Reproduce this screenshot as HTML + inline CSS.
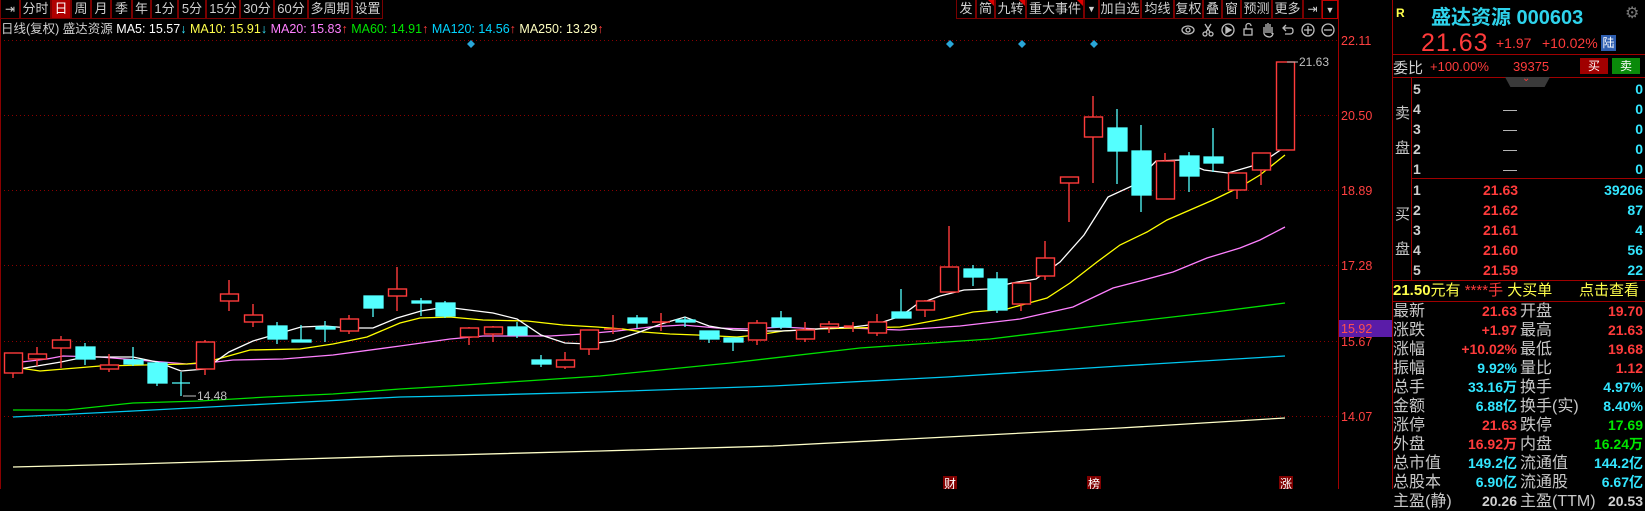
<!DOCTYPE html>
<html><head><meta charset="utf-8"><style>
*{margin:0;padding:0;box-sizing:border-box}
body{width:1645px;height:489px;background:#000;overflow:hidden;position:relative;font-family:"Liberation Sans","Noto Sans CJK SC",sans-serif;color:#c8c8c8}
.a{position:absolute;white-space:nowrap}
.tb{position:absolute;top:0;height:19px;border:1px solid #7a0000;border-top:none;font-size:13px;line-height:18px;text-align:center;color:#d0d0d0}
.tri{position:absolute;right:0;top:0;width:0;height:0;border-left:6px solid transparent;border-top:6px solid #e00000}
.r{color:#ff3b3b}.c{color:#33e6ff}.y{color:#ffff4c}.g{color:#00e600}.w{color:#d0d0d0}
.lb{font-size:15px;color:#c8c8c8}
.v{font-size:14px;font-weight:bold;text-align:right}
</style></head><body>

<div class="tb" style="left:0;width:20px;font-size:12px">⇥</div>
<div class="tb" style="left:20px;width:31px">分时</div>
<div class="tb" style="left:51px;width:20px;background:#b00000;color:#fff">日</div>
<div class="tb" style="left:71px;width:20px">周</div>
<div class="tb" style="left:91px;width:20px">月</div>
<div class="tb" style="left:111px;width:21px">季</div>
<div class="tb" style="left:132px;width:19px">年</div>
<div class="tb" style="left:151px;width:27px">1分</div>
<div class="tb" style="left:178px;width:28px">5分</div>
<div class="tb" style="left:206px;width:34px">15分</div>
<div class="tb" style="left:240px;width:34px">30分</div>
<div class="tb" style="left:274px;width:34px">60分</div>
<div class="tb" style="left:308px;width:44px">多周期</div>
<div class="tb" style="left:352px;width:31px">设置</div>

<div class="tb" style="left:956px;width:20px">发</div>
<div class="tb" style="left:976px;width:19px">简<div class="tri"></div></div>
<div class="tb" style="left:995px;width:31px">九转<div class="tri"></div></div>
<div class="tb" style="left:1026px;width:58px">重大事件<div class="tri"></div></div>
<div class="tb" style="left:1084px;width:15px;font-size:9px">▼</div>
<div class="tb" style="left:1099px;width:42px">加自选</div>
<div class="tb" style="left:1141px;width:33px">均线</div>
<div class="tb" style="left:1174px;width:29px">复权</div>
<div class="tb" style="left:1203px;width:19px">叠</div>
<div class="tb" style="left:1222px;width:19px">窗</div>
<div class="tb" style="left:1241px;width:31px">预测</div>
<div class="tb" style="left:1272px;width:31px">更多</div>
<div class="tb" style="left:1303px;width:19px;font-size:12px">⇥</div>
<div class="tb" style="left:1322px;width:16px;font-size:9px;border:1px solid #c00000">▼</div>

<div class="a" style="left:1px;top:21px;font-size:12.5px;line-height:16px">
<span class="w">日线(复权) 盛达资源 </span><span style="color:#fff">MA5: 15.57</span><span class="c">↓</span> <span class="y">MA10: 15.91</span><span class="c">↓</span> <span style="color:#ff80ff">MA20: 15.83</span><span class="r">↑</span> <span class="g">MA60: 14.91</span><span class="r">↑</span> <span style="color:#00d4ff">MA120: 14.56</span><span class="r">↑</span> <span style="color:#ffffc0">MA250: 13.29</span><span class="r">↑</span></div>

<svg class="a" style="left:0;top:0" width="1392" height="489">
<line x1="0.5" y1="19" x2="0.5" y2="489" stroke="#8a0000"/>
<line x1="1338.5" y1="0" x2="1338.5" y2="489" stroke="#a00000"/>
<g stroke="#8a0000" stroke-dasharray="1,3">
<line x1="0" y1="40.5" x2="1338" y2="40.5"/><line x1="0" y1="115.5" x2="1338" y2="115.5"/>
<line x1="0" y1="190.5" x2="1338" y2="190.5"/><line x1="0" y1="265.5" x2="1338" y2="265.5"/>
<line x1="0" y1="341.5" x2="1338" y2="341.5"/><line x1="0" y1="416.5" x2="1338" y2="416.5"/>
</g>
<g stroke="#bdbdbd" fill="none" stroke-width="1.3">
<ellipse cx="1188" cy="30" rx="6" ry="4"/><circle cx="1188" cy="30" r="2"/>
<circle cx="1205" cy="34" r="2"/><circle cx="1211" cy="34" r="2"/><path d="M1206 32L1211 24M1210 32L1205 24"/>
<circle cx="1228" cy="30" r="6"/><path d="M1226 27L1231 30L1226 33Z" fill="#bdbdbd"/>
<rect x="1244" y="29" width="8" height="6"/><path d="M1246 29V26a2.5 2.5 0 0 1 5 0"/>
<path d="M1264 34V27M1266 33V24M1268 33V23M1270 33V24M1272 34V27M1264 34Q1266 37 1270 37Q1273 36 1273 33"/>
<path d="M1284 28H1291Q1293 28 1293 31Q1293 34 1290 34H1285M1286 25L1283 28L1286 31"/>
<circle cx="1308" cy="30" r="6"/><path d="M1304 30H1312M1308 26V34"/>
<circle cx="1328" cy="30" r="6"/><path d="M1324 30H1332"/>
</g>
<g fill="#2aa6d8">
<path d="M471 40L475 44L471 48L467 44Z"/><path d="M950 40L954 44L950 48L946 44Z"/>
<path d="M1022 40L1026 44L1022 48L1018 44Z"/><path d="M1094 40L1098 44L1094 48L1090 44Z"/>
</g>
<g fill="none" stroke-width="1.3">
<polyline stroke="#ffffc8" points="13,467 133,464 267,460 400,456 450,455 600,451 773,446 947,437 1120,428 1285,418"/>
<polyline stroke="#00c8f0" points="13,417 133,411 267,404 400,397 450,396 600,392 773,386 947,377 1120,366 1285,356"/>
<polyline stroke="#00e000" points="13,410 67,410 133,403 200,401 267,397 333,394 400,389 450,386 600,376 730,363 860,348 990,339 1120,323 1207,313 1285,303"/>
<polyline stroke="#ff80ff" points="13,363 47,359 63,356 100,357 150,361 187,364 207,363 233,360 283,359 333,355 400,346 450,339 483,336 550,336 583,334 617,331 650,327 683,325 717,328 750,329 783,327 817,329 850,328 900,330 960,326 1020,319 1073,307 1113,288 1140,281 1173,272 1207,258 1240,248 1260,240 1285,227"/>
<polyline stroke="#ffff00" points="13,367 40,371 100,366 187,364 207,362 250,350 300,349 333,344 367,337 400,323 420,318 450,317 483,320 527,321 563,325 597,327 623,329 643,332 670,334 697,335 717,336 737,337 757,335 783,331 817,329 850,328 900,327 943,319 973,312 1007,309 1047,298 1070,283 1097,262 1120,245 1147,232 1167,220 1190,210 1213,200 1240,187 1260,175 1285,155"/>
<polyline stroke="#ffffff" points="13,370 37,366 61,362 85,357 109,357 133,357 157,362 181,371 205,369 229,352 253,341 277,334 301,327 325,326 349,328 373,328 397,318 421,311 445,307 469,310 493,313 517,319 541,335 565,343 589,344 613,341 637,333 661,324 685,317 709,326 733,330 757,331 781,331 805,330 829,328 853,327 877,324 901,316 916,305 940,296 964,290 988,289 1012,283 1036,279 1060,262 1084,235 1108,197 1132,186 1156,161 1180,160 1204,170 1228,173 1252,166 1270,157 1285,147"/>
</g>
<g stroke="#ff3b3b" stroke-width="1.4" fill="#000">
<line x1="13" y1="353" x2="13" y2="378"/><rect x="4.5" y="353" width="18" height="20"/>
<line x1="37" y1="347" x2="37" y2="366"/><rect x="28.5" y="354" width="18" height="5"/>
<line x1="61" y1="336" x2="61" y2="368"/><rect x="52.5" y="340" width="18" height="8"/>
<line x1="109" y1="354" x2="109" y2="372"/><rect x="100.5" y="365" width="18" height="4"/>
<line x1="205" y1="340" x2="205" y2="375"/><rect x="196.5" y="342" width="18" height="27"/>
<line x1="229" y1="280" x2="229" y2="311"/><rect x="220.5" y="294" width="18" height="7"/>
<line x1="253" y1="304" x2="253" y2="327"/><rect x="244.5" y="315" width="18" height="7"/>
<line x1="349" y1="315" x2="349" y2="334"/><rect x="340.5" y="319" width="18" height="12"/>
<line x1="397" y1="267" x2="397" y2="311"/><rect x="388.5" y="289" width="18" height="7"/>
<line x1="469" y1="327" x2="469" y2="345"/><rect x="460.5" y="328" width="18" height="9"/>
<line x1="493" y1="326" x2="493" y2="342"/><rect x="484.5" y="327" width="18" height="7"/>
<line x1="565" y1="352" x2="565" y2="369"/><rect x="556.5" y="360" width="18" height="7"/>
<line x1="589" y1="330" x2="589" y2="355"/><rect x="580.5" y="330" width="18" height="19"/>
<line x1="613" y1="315" x2="613" y2="334"/><line x1="604" y1="329" x2="622" y2="329"/>
<line x1="661" y1="313" x2="661" y2="331"/><line x1="652" y1="322" x2="670" y2="322"/>
<line x1="757" y1="320" x2="757" y2="345"/><rect x="748.5" y="323" width="18" height="17"/>
<line x1="805" y1="322" x2="805" y2="342"/><rect x="796.5" y="330" width="18" height="9"/>
<line x1="829" y1="321" x2="829" y2="333"/><rect x="820.5" y="324" width="18" height="3"/>
<line x1="853" y1="322" x2="853" y2="332"/><rect x="844.5" y="326" width="8" height="1"/>
<line x1="877" y1="314" x2="877" y2="336"/><rect x="868.5" y="322" width="18" height="11"/>
<line x1="925" y1="300" x2="925" y2="317"/><rect x="916.5" y="301" width="18" height="9"/>
<line x1="949" y1="226" x2="949" y2="292"/><rect x="940.5" y="267" width="18" height="25"/>
<line x1="1021" y1="283" x2="1021" y2="311"/><rect x="1012.5" y="283" width="18" height="21"/>
<line x1="1045" y1="241" x2="1045" y2="280"/><rect x="1036.5" y="258" width="18" height="18"/>
<line x1="1069" y1="177" x2="1069" y2="222"/><rect x="1060.5" y="177" width="18" height="6"/>
<line x1="1093" y1="96" x2="1093" y2="183"/><rect x="1084.5" y="117" width="18" height="20"/>
<line x1="1165" y1="153" x2="1165" y2="199"/><rect x="1156.5" y="161" width="18" height="38"/>
<line x1="1237" y1="173" x2="1237" y2="199"/><rect x="1228.5" y="173" width="18" height="17"/>
<line x1="1261" y1="153" x2="1261" y2="185"/><rect x="1252.5" y="153" width="18" height="17"/>
<rect x="1276.5" y="62" width="18" height="88"/>
</g>
<g stroke="#54ffff" stroke-width="1.3" fill="#54ffff">
<line x1="85" y1="343" x2="85" y2="365"/><rect x="76" y="347" width="19" height="12"/>
<line x1="133" y1="347" x2="133" y2="366"/><rect x="124" y="360" width="19" height="4"/>
<line x1="157" y1="362" x2="157" y2="386"/><rect x="148" y="363" width="19" height="20"/>
<line x1="181" y1="372" x2="181" y2="396"/><line x1="172" y1="383" x2="190" y2="383"/>
<line x1="277" y1="322" x2="277" y2="344"/><rect x="268" y="326" width="19" height="13"/>
<line x1="301" y1="325" x2="301" y2="342"/><rect x="292" y="340" width="19" height="2"/>
<line x1="325" y1="321" x2="325" y2="342"/><rect x="316" y="327" width="19" height="2"/>
<line x1="373" y1="296" x2="373" y2="317"/><rect x="364" y="296" width="19" height="12"/>
<line x1="421" y1="298" x2="421" y2="316"/><rect x="412" y="301" width="19" height="2"/>
<line x1="445" y1="301" x2="445" y2="318"/><rect x="436" y="303" width="19" height="13"/>
<line x1="517" y1="322" x2="517" y2="338"/><rect x="508" y="327" width="19" height="8"/>
<line x1="541" y1="355" x2="541" y2="367"/><rect x="532" y="360" width="19" height="4"/>
<line x1="637" y1="315" x2="637" y2="328"/><rect x="628" y="318" width="19" height="5"/>
<line x1="685" y1="317" x2="685" y2="327"/><rect x="676" y="320" width="19" height="2"/>
<line x1="709" y1="331" x2="709" y2="343"/><rect x="700" y="331" width="19" height="8"/>
<line x1="733" y1="338" x2="733" y2="351"/><rect x="724" y="338" width="19" height="4"/>
<line x1="781" y1="311" x2="781" y2="329"/><rect x="772" y="318" width="19" height="9"/>
<line x1="901" y1="289" x2="901" y2="318"/><rect x="892" y="312" width="19" height="6"/>
<line x1="973" y1="265" x2="973" y2="286"/><rect x="964" y="269" width="19" height="8"/>
<line x1="997" y1="272" x2="997" y2="313"/><rect x="988" y="279" width="19" height="31"/>
<line x1="1117" y1="109" x2="1117" y2="184"/><rect x="1108" y="128" width="19" height="23"/>
<line x1="1141" y1="125" x2="1141" y2="212"/><rect x="1132" y="151" width="19" height="44"/>
<line x1="1189" y1="152" x2="1189" y2="192"/><rect x="1180" y="156" width="19" height="20"/>
<line x1="1213" y1="128" x2="1213" y2="172"/><rect x="1204" y="157" width="19" height="6"/>
</g>
<g fill="#c0c0c0" font-size="12" font-family="Liberation Sans, sans-serif">
<line x1="183" y1="396" x2="196" y2="396" stroke="#c0c0c0"/><text x="197" y="400">14.48</text>
<line x1="1287" y1="62" x2="1298" y2="62" stroke="#c0c0c0"/><text x="1299" y="66">21.63</text>
</g>
<g fill="#ff4040" font-size="12.5" font-family="Liberation Sans, sans-serif">
<text x="1341" y="45">22.11</text><text x="1341" y="120">20.50</text><text x="1341" y="195">18.89</text>
<text x="1341" y="270">17.28</text><text x="1341" y="346">15.67</text><text x="1341" y="421">14.07</text>
</g>
<rect x="1339" y="320" width="53" height="17" fill="#5a1ca8"/>
<text x="1341" y="333" fill="#ff5050" font-size="12.5" font-family="Liberation Sans, sans-serif">15.92</text>
<rect x="943" y="476" width="14" height="13" fill="#800000"/><text x="944" y="488" fill="#fff" font-size="12" font-family="Noto Sans CJK SC, sans-serif">财</text>
<rect x="1087" y="476" width="14" height="13" fill="#800000"/><text x="1088" y="488" fill="#fff" font-size="12" font-family="Noto Sans CJK SC, sans-serif">榜</text>
<rect x="1279" y="476" width="14" height="13" fill="#800000"/><text x="1280" y="488" fill="#fff" font-size="12" font-family="Noto Sans CJK SC, sans-serif">涨</text>
</svg>

<div class="a" style="left:1392px;top:0;width:1px;height:489px;background:#a00000"></div>
<div class="a" style="left:1411px;top:77px;width:1px;height:203px;background:#a00000"></div>
<div class="a" style="left:1392px;top:54px;width:253px;height:1px;background:#a00000"></div>
<div class="a" style="left:1392px;top:77px;width:253px;height:1px;background:#a00000"></div>
<div class="a" style="left:1411px;top:178px;width:234px;height:1px;background:#a00000"></div>
<div class="a" style="left:1392px;top:280px;width:253px;height:1px;background:#a00000"></div>
<div class="a" style="left:1392px;top:301px;width:253px;height:1px;background:#a00000"></div>

<div class="a y" style="left:1396px;top:6px;font-size:12px;font-weight:bold">R</div>
<div class="a" style="left:1431px;top:1px;font-size:20px;font-weight:bold;color:#2ed3ec">盛达资源 000603</div>
<div class="a" style="left:1625px;top:3px;font-size:16px;color:#777">⚙</div>
<div class="a r" style="left:1421px;top:29px;font-size:25px;letter-spacing:1px">21.63</div>
<div class="a r" style="left:1496px;top:35px;font-size:14px">+1.97</div>
<div class="a r" style="left:1542px;top:35px;font-size:14px">+10.02%</div>
<div class="a" style="left:1601px;top:35px;width:15px;height:16px;background:#2f5fb0;color:#fff;font-size:12px;text-align:center;line-height:16px">陆</div>
<div class="a w" style="left:1393px;top:57px;font-size:15px">委比</div>
<div class="a r" style="left:1430px;top:59px;font-size:13px">+100.00%</div>
<div class="a r" style="left:1513px;top:59px;font-size:13px">39375</div>
<div class="a" style="left:1580px;top:58px;width:28px;height:16px;background:#a00000;color:#fff;font-size:12px;text-align:center;line-height:16px">买</div>
<div class="a" style="left:1612px;top:58px;width:28px;height:16px;background:#0a8a0a;color:#fff;font-size:12px;text-align:center;line-height:16px">卖</div>
<div class="a" style="left:1505px;top:77px;width:45px;height:10px;background:#3a3a3a;clip-path:polygon(0 0,100% 0,88% 100%,12% 100%)"></div>
<div class="a r" style="left:1522px;top:73px;font-size:10px">⌄</div>

<div class="a lb" style="left:1395px;top:102px">卖</div>
<div class="a lb" style="left:1395px;top:137px">盘</div>
<div class="a lb" style="left:1395px;top:203px">买</div>
<div class="a lb" style="left:1395px;top:238px">盘</div>

<div class="a w" style="left:1413px;top:79px;font-size:14px;font-weight:bold;line-height:20px">5<br>4<br>3<br>2<br>1</div>
<div class="a" style="left:1503px;top:79px;font-size:14px;line-height:20px;color:#c0c0c0"><br>—<br>—<br>—<br>—</div>
<div class="a c" style="left:1560px;top:79px;width:83px;text-align:right;font-size:14px;font-weight:bold;line-height:20px">0<br>0<br>0<br>0<br>0</div>
<div class="a w" style="left:1413px;top:180px;font-size:14px;font-weight:bold;line-height:20px">1<br>2<br>3<br>4<br>5</div>
<div class="a r" style="left:1483px;top:180px;font-size:14px;font-weight:bold;line-height:20px">21.63<br>21.62<br>21.61<br>21.60<br>21.59</div>
<div class="a c" style="left:1560px;top:180px;width:83px;text-align:right;font-size:14px;font-weight:bold;line-height:20px">39206<br>87<br>4<br>56<br>22</div>

<div class="a y" style="left:1393px;top:281px;font-size:15px;line-height:20px"><b>21.50</b>元有 <span class="r">****手</span> 大买单</div>
<div class="a y" style="left:1579px;top:281px;font-size:15px;line-height:20px">点击查看</div>

<div class="a lb" style="left:1393px;top:302px;line-height:19px;font-size:16px">最新<br>涨跌<br>涨幅<br>振幅<br>总手<br>金额<br>涨停<br>外盘<br>总市值<br>总股本<br>主盈(静)</div>
<div class="a lb" style="left:1520px;top:302px;line-height:19px;font-size:16px">开盘<br>最高<br>最低<br>量比<br>换手<br>换手(实)<br>跌停<br>内盘<br>流通值<br>流通股<br>主盈(TTM)</div>
<div class="a v" style="left:1420px;top:302px;width:97px;line-height:19px">
<div class="r">21.63</div><div class="r">+1.97</div><div class="r">+10.02%</div><div class="c">9.92%</div><div class="c">33.16万</div><div class="c">6.88亿</div><div class="r">21.63</div><div class="r">16.92万</div><div class="c">149.2亿</div><div class="c">6.90亿</div><div class="w">20.26</div></div>
<div class="a v" style="left:1546px;top:302px;width:97px;line-height:19px">
<div class="r">19.70</div><div class="r">21.63</div><div class="r">19.68</div><div class="r">1.12</div><div class="c">4.97%</div><div class="c">8.40%</div><div class="g">17.69</div><div class="g">16.24万</div><div class="c">144.2亿</div><div class="c">6.67亿</div><div class="w">20.53</div></div>
</body></html>
